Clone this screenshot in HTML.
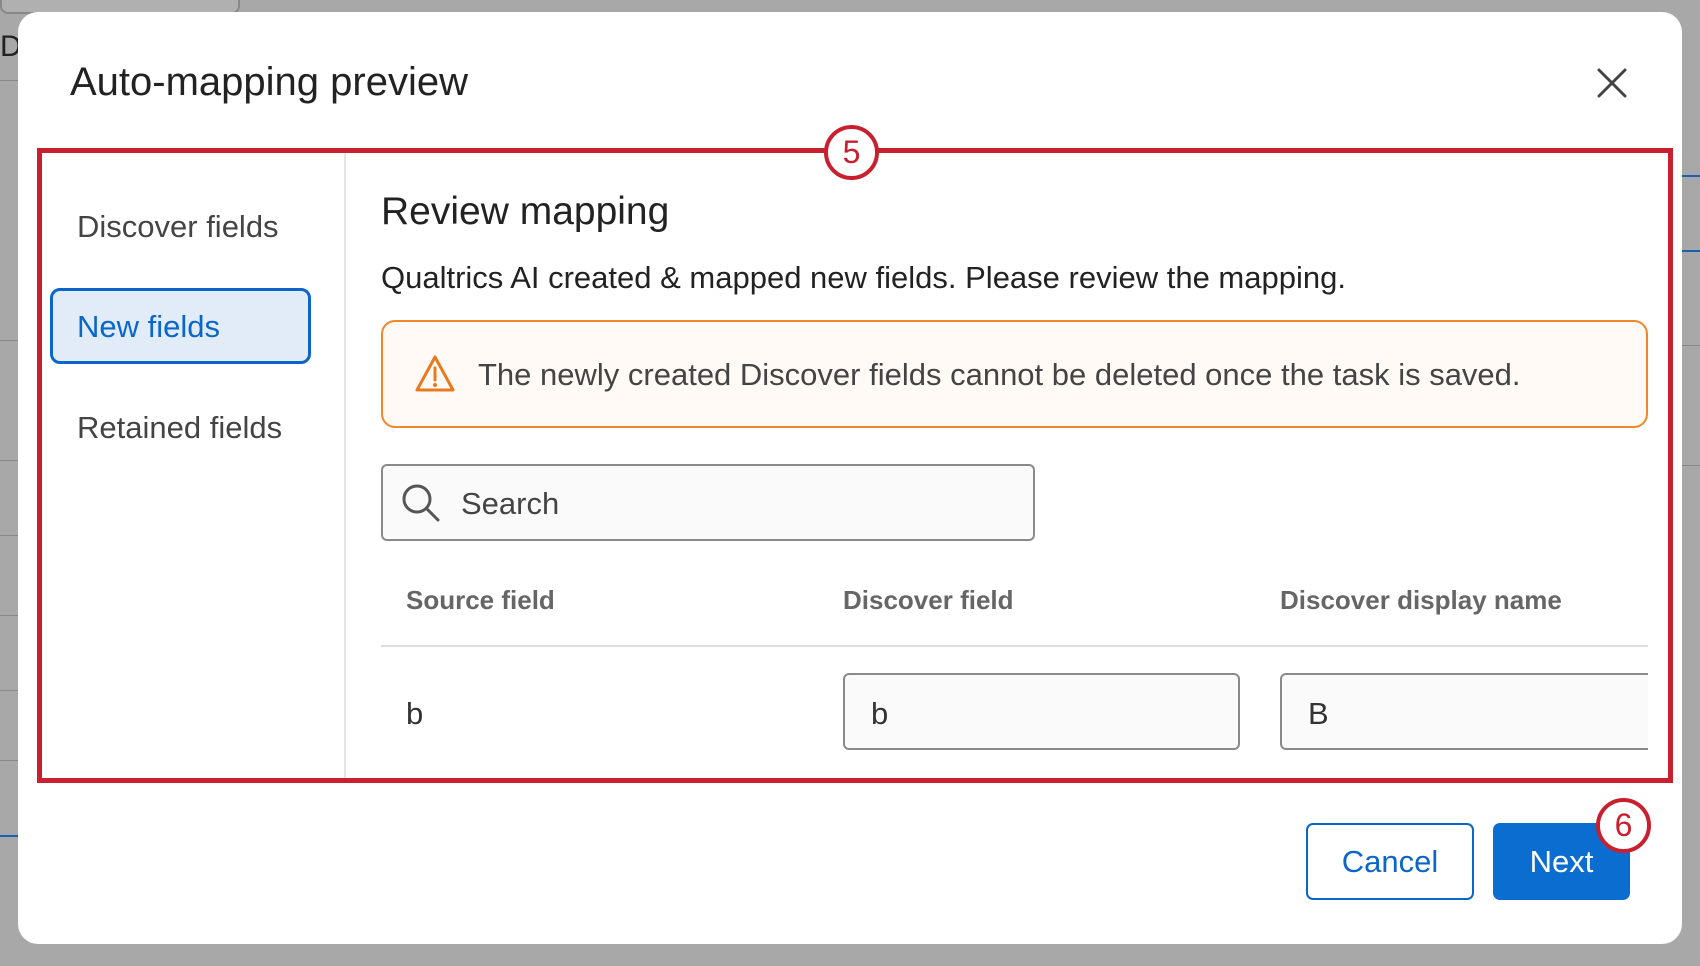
<!DOCTYPE html>
<html><head><meta charset="utf-8"><style>
*{box-sizing:border-box;margin:0;padding:0}
body{width:1700px;height:966px;background:#a8a8a8;font-family:"Liberation Sans",Arial,sans-serif;position:relative;overflow:hidden;color:#333}
.abs{position:absolute}
.modal{left:18px;top:12px;width:1664px;height:932px;background:#fff;border-radius:20px}
.t{white-space:nowrap}
</style></head><body>
<div class="abs" style="left:0;top:0;width:240px;height:14px;border:2px solid #888;border-top:none;border-radius:0 0 8px 8px;background:#b0b0b0"></div>
<div class="abs t" style="left:0;top:30px;font-size:30px;color:#222">Di</div>
<div class="abs" style="left:0;top:80px;width:18px;height:1px;background:#888"></div>
<div class="abs" style="left:0;top:340px;width:18px;height:1px;background:#888"></div>
<div class="abs" style="left:0;top:460px;width:18px;height:1px;background:#888"></div>
<div class="abs" style="left:0;top:535px;width:18px;height:1px;background:#888"></div>
<div class="abs" style="left:0;top:615px;width:18px;height:1px;background:#888"></div>
<div class="abs" style="left:0;top:690px;width:18px;height:1px;background:#888"></div>
<div class="abs" style="left:0;top:760px;width:18px;height:1px;background:#888"></div>
<div class="abs" style="left:0;top:835px;width:18px;height:2px;background:#1a5fb4"></div>
<div class="abs" style="left:1682px;top:175px;width:18px;height:2px;background:#1a5fb4"></div>
<div class="abs" style="left:1682px;top:250px;width:18px;height:2px;background:#1a5fb4"></div>
<div class="abs" style="left:1682px;top:345px;width:18px;height:1px;background:#888"></div>
<div class="abs" style="left:1682px;top:465px;width:18px;height:1px;background:#888"></div>

<div class="abs modal"></div>
<div class="abs t" style="left:70px;top:60px;font-size:40px;color:#222">Auto-mapping preview</div>
<svg class="abs" style="left:1596px;top:67px" width="32" height="32" viewBox="0 0 32 32"><path d="M3 3L29 29M29 3L3 29" stroke="#444" stroke-width="3" stroke-linecap="round"/></svg>

<div class="abs" style="left:37px;top:148px;width:1636px;height:635px;border:5px solid #c8202f"></div>
<div class="abs" style="left:344px;top:153px;width:2px;height:625px;background:#e6e6e6"></div>
<div class="abs t" style="left:77px;top:209px;font-size:31px;color:#444">Discover fields</div>
<div class="abs" style="left:50px;top:288px;width:261px;height:76px;border:3px solid #0b66c9;border-radius:10px;background:#e2ecf8"></div>
<div class="abs t" style="left:77px;top:309px;font-size:31px;color:#0b66c9">New fields</div>
<div class="abs t" style="left:77px;top:410px;font-size:31px;color:#444">Retained fields</div>

<div class="abs t" style="left:381px;top:190px;font-size:39px;color:#222">Review mapping</div>
<div class="abs t" style="left:381px;top:260px;font-size:31px;color:#222">Qualtrics AI created &amp; mapped new fields. Please review the mapping.</div>

<div class="abs" style="left:381px;top:320px;width:1267px;height:108px;border:2px solid #f0872a;border-radius:14px;background:#fffaf5"></div>
<svg class="abs" style="left:414px;top:354px" width="42" height="40" viewBox="0 0 42 40"><path d="M21 3L39 36H3Z" fill="none" stroke="#e8791e" stroke-width="3" stroke-linejoin="round"/><path d="M21 14V26" stroke="#e8791e" stroke-width="3" stroke-linecap="round"/><circle cx="21" cy="31" r="2" fill="#e8791e"/></svg>
<div class="abs t" style="left:478px;top:357px;font-size:31px;color:#444">The newly created Discover fields cannot be deleted once the task is saved.</div>

<div class="abs" style="left:381px;top:464px;width:654px;height:77px;border:2px solid #8a8a8a;border-radius:6px;background:#fafafa"></div>
<svg class="abs" style="left:400px;top:482px" width="42" height="42" viewBox="0 0 42 42"><circle cx="17" cy="17" r="13" fill="none" stroke="#555" stroke-width="3"/><path d="M26.5 26.5L38 38" stroke="#555" stroke-width="3" stroke-linecap="round"/></svg>
<div class="abs t" style="left:461px;top:486px;font-size:31px;color:#444">Search</div>

<div class="abs t" style="left:406px;top:585px;font-size:26px;font-weight:bold;color:#666">Source field</div>
<div class="abs t" style="left:843px;top:585px;font-size:26px;font-weight:bold;color:#666">Discover field</div>
<div class="abs t" style="left:1280px;top:585px;font-size:26px;font-weight:bold;color:#666">Discover display name</div>
<div class="abs" style="left:381px;top:645px;width:1267px;height:2px;background:#ddd"></div>

<div class="abs t" style="left:406px;top:696px;font-size:31px;color:#333">b</div>
<div class="abs" style="left:843px;top:673px;width:397px;height:77px;border:2px solid #8a8a8a;border-radius:6px;background:#fafafa"></div>
<div class="abs t" style="left:871px;top:696px;font-size:31px;color:#333">b</div>
<div class="abs" style="left:1280px;top:673px;width:368px;height:77px;border:2px solid #8a8a8a;border-right:none;border-radius:6px 0 0 6px;background:#fafafa"></div>
<div class="abs t" style="left:1308px;top:696px;font-size:31px;color:#333">B</div>

<div class="abs" style="left:824px;top:125px;width:55px;height:55px;border:4px solid #c8202f;border-radius:50%;background:#fff;text-align:center;line-height:47px;font-size:32px;color:#c8202f">5</div>

<div class="abs" style="left:1306px;top:823px;width:168px;height:77px;border:2px solid #0b66c9;border-radius:7px;background:#fff;text-align:center;line-height:73px;font-size:31px;color:#0b66c9">Cancel</div>
<div class="abs" style="left:1493px;top:823px;width:137px;height:77px;border-radius:7px;background:#0b6dd0;text-align:center;line-height:77px;font-size:31px;color:#fff">Next</div>
<div class="abs" style="left:1596px;top:798px;width:55px;height:55px;border:4px solid #c8202f;border-radius:50%;background:#fff;text-align:center;line-height:47px;font-size:32px;color:#c8202f">6</div>
</body></html>
